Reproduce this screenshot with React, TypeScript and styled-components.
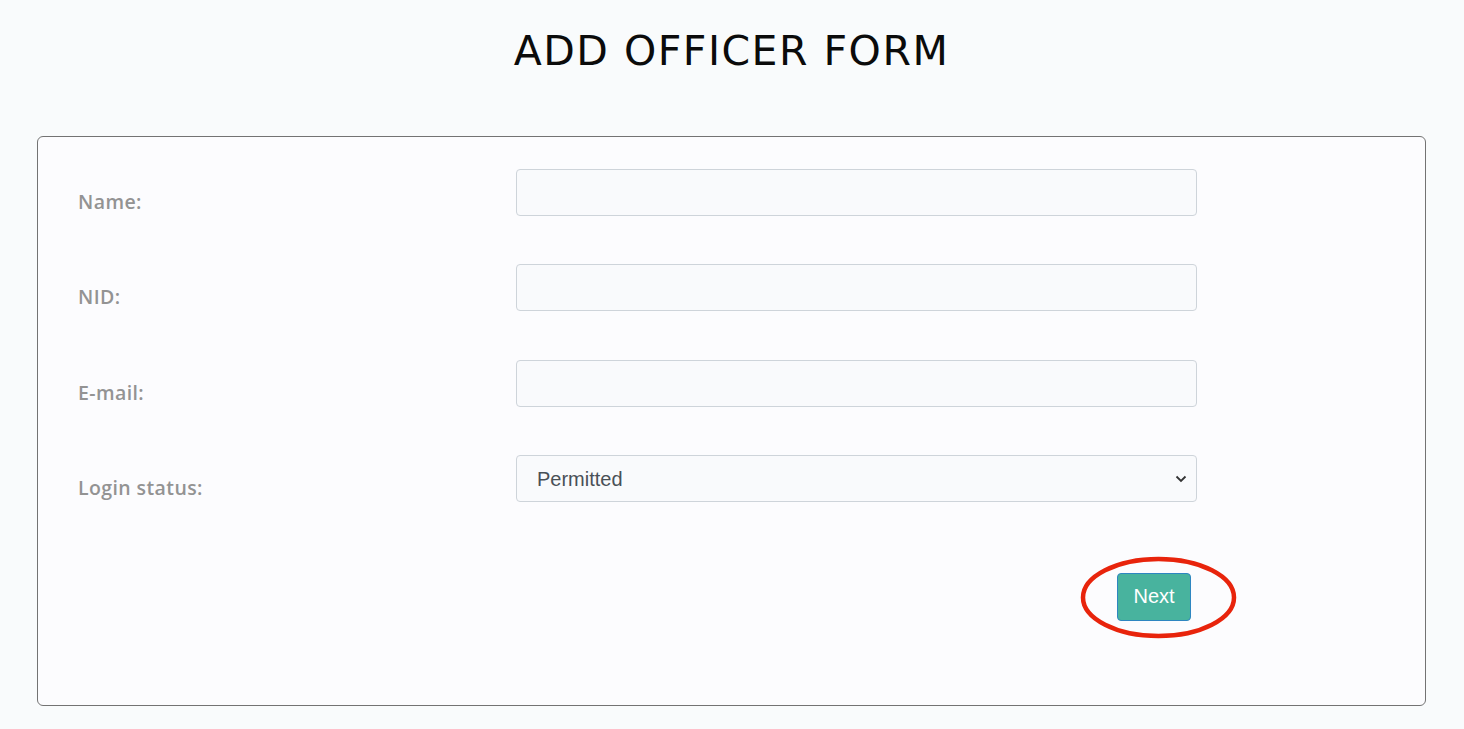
import React from "react";
import styled, { createGlobalStyle } from "styled-components";

const Global = createGlobalStyle`
  html, body { margin: 0; padding: 0; background: #f9fbfc; }
  * { box-sizing: border-box; }
`;

const Page = styled.div`
  padding: 0 38px 0 37px;
  font-family: "DejaVu Sans", "Liberation Sans", sans-serif;
`;

const Title = styled.h1`
  margin: 0;
  padding-top: 27px;
  height: 136px;
  text-align: center;
  font-family: "DejaVu Sans", sans-serif;
  font-weight: 400;
  font-size: 41px;
  letter-spacing: 1.5px;
  color: #0b0b0b;
  line-height: 48px;
`;

const Card = styled.form`
  border: 1.5px solid #737373;
  border-radius: 6px;
  background: #fcfcfe;
  padding: 32px 0 84px 40px;
  height: 570px;
  display: flex;
  flex-direction: column;
`;

const Rows = styled.div`
  display: flex;
  flex-direction: column;
  gap: 48.4px;
`;

const Row = styled.div`
  display: grid;
  grid-template-columns: 438px 681px;
  align-items: center;
`;

const Label = styled.label`
  font-family: "Open Sans", "DejaVu Sans", sans-serif;
  font-size: 19.5px;
  font-weight: 600;
  color: #939393;
  padding-top: 18px;
  letter-spacing: 0.4px;
`;

const Field = styled.input`
  height: 47px;
  width: 100%;
  border: 1px solid #ced4da;
  border-radius: 4px;
  background: #f9fafc;
  padding: 0 20px;
  font-family: "Liberation Sans", Arial, sans-serif;
  font-size: 20px;
  color: #495057;
  outline: none;
`;

const SelectWrap = styled.div`
  position: relative;
  height: 47px;
`;

const Select = styled.select`
  appearance: none;
  height: 47px;
  width: 100%;
  border: 1px solid #ced4da;
  border-radius: 4px;
  background: #f9fafc;
  padding: 0 20px;
  font-family: "Liberation Sans", Arial, sans-serif;
  font-size: 20px;
  color: #495057;
  outline: none;
`;

const Chevron = styled.svg`
  position: absolute;
  right: 10px;
  top: 19px;
  pointer-events: none;
`;

const ActionRow = styled.div`
  display: grid;
  grid-template-columns: 438px 681px;
  margin-top: 70.5px;
`;

const ButtonCell = styled.div`
  grid-column: 2;
  display: flex;
  justify-content: flex-end;
  padding-right: 6px;
`;

const ButtonHolder = styled.div`
  position: relative;
`;

const NextButton = styled.button`
  width: 74px;
  height: 48px;
  background: #48b39e;
  border: 1px solid #2e86c1;
  border-radius: 4px;
  color: #fff;
  font-family: "Liberation Sans", Arial, sans-serif;
  font-size: 20px;
  padding: 0;
  cursor: pointer;
`;

const Highlight = styled.svg`
  position: absolute;
  left: -38px;
  top: -18px;
  pointer-events: none;
  overflow: visible;
`;

export default function App() {
  return (
    <>
      <Global />
      <Page>
        <Title>ADD OFFICER FORM</Title>
        <Card onSubmit={(e) => e.preventDefault()}>
          <Rows>
            <Row>
              <Label htmlFor="name">Name:</Label>
              <Field id="name" type="text" />
            </Row>
            <Row>
              <Label htmlFor="nid">NID:</Label>
              <Field id="nid" type="text" />
            </Row>
            <Row>
              <Label htmlFor="email">E-mail:</Label>
              <Field id="email" type="email" />
            </Row>
            <Row>
              <Label htmlFor="status">Login status:</Label>
              <SelectWrap>
                <Select id="status" defaultValue="Permitted">
                  <option>Permitted</option>
                  <option>Not permitted</option>
                </Select>
                <Chevron width="12" height="9" viewBox="0 0 12 9">
                  <path d="M1.5 2.5 L6 7 L10.5 2.5" fill="none" stroke="#333" strokeWidth="1.8" />
                </Chevron>
              </SelectWrap>
            </Row>
          </Rows>
          <ActionRow>
            <ButtonCell>
              <ButtonHolder>
                <NextButton type="submit">Next</NextButton>
                <Highlight width="160" height="86" viewBox="0 0 160 86">
                  <ellipse cx="79.5" cy="42.5" rx="75.5" ry="38.5" fill="none" stroke="#e8240c" strokeWidth="4.5" />
                </Highlight>
              </ButtonHolder>
            </ButtonCell>
          </ActionRow>
        </Card>
      </Page>
    </>
  );
}
